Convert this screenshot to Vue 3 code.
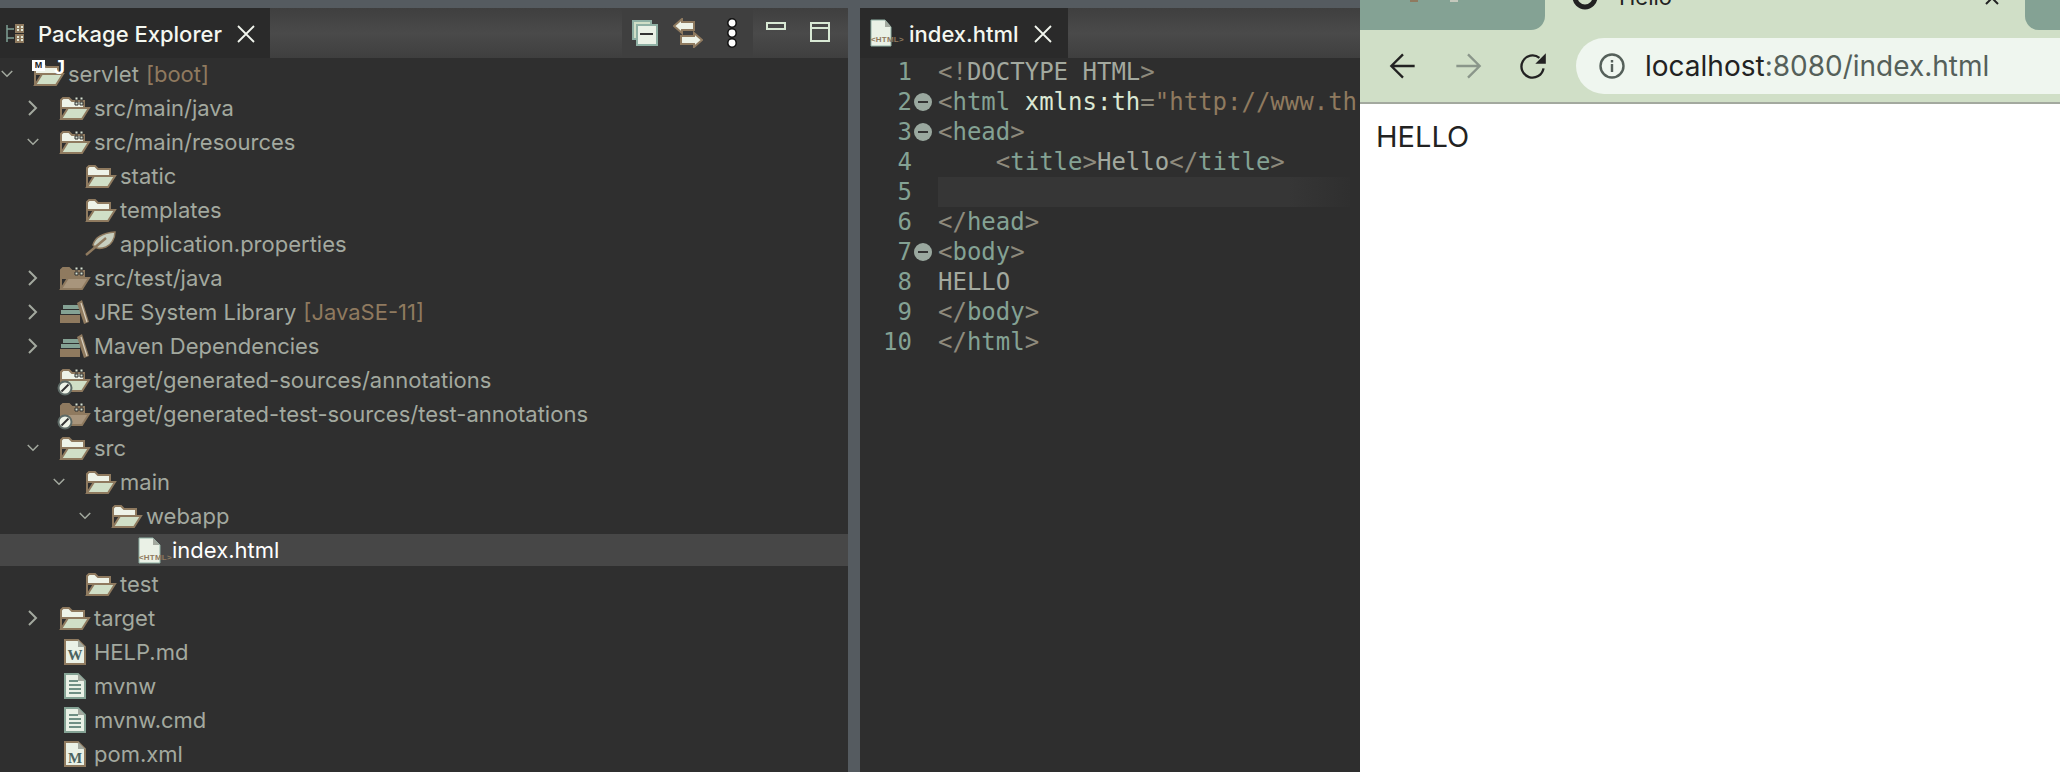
<script setup>
const rows = [
  { d: 0, c: 'down', i: 'project', t: 'servlet', x: '[boot]' },
  { d: 1, c: 'right', i: 'pkg', t: 'src/main/java' },
  { d: 1, c: 'down', i: 'pkg', t: 'src/main/resources' },
  { d: 2, c: '', i: 'folder', t: 'static' },
  { d: 2, c: '', i: 'folder', t: 'templates' },
  { d: 2, c: '', i: 'feather', t: 'application.properties' },
  { d: 1, c: 'right', i: 'pkgtest', t: 'src/test/java' },
  { d: 1, c: 'right', i: 'lib', t: 'JRE System Library', x: '[JavaSE-11]' },
  { d: 1, c: 'right', i: 'lib', t: 'Maven Dependencies' },
  { d: 1, c: '', i: 'pkgoff', t: 'target/generated-sources/annotations' },
  { d: 1, c: '', i: 'pkgtestoff', t: 'target/generated-test-sources/test-annotations' },
  { d: 1, c: 'down', i: 'folder', t: 'src' },
  { d: 2, c: 'down', i: 'folder', t: 'main' },
  { d: 3, c: 'down', i: 'folder', t: 'webapp' },
  { d: 4, c: '', i: 'html', t: 'index.html', sel: true },
  { d: 2, c: '', i: 'folder', t: 'test' },
  { d: 1, c: 'right', i: 'folder', t: 'target' },
  { d: 1, c: '', i: 'word', t: 'HELP.md' },
  { d: 1, c: '', i: 'text', t: 'mvnw' },
  { d: 1, c: '', i: 'text', t: 'mvnw.cmd' },
  { d: 1, c: '', i: 'maven', t: 'pom.xml' },
]
const isFolder = i => ['project', 'pkg', 'folder', 'pkgoff'].includes(i)
const isPkg = i => ['pkg', 'pkgoff', 'pkgtest', 'pkgtestoff'].includes(i)
const isTest = i => ['pkgtest', 'pkgtestoff'].includes(i)
const isOff = i => ['pkgoff', 'pkgtestoff'].includes(i)
const isDoc = i => ['word', 'text', 'maven'].includes(i)
const lines = [
  { n: 1, html: [['b', '<!'], ['g', 'DOCTYPE HTML'], ['b', '>']] },
  { n: 2, fold: true, html: [['b', '<'], ['t', 'html'], ['g', ' '], ['a', 'xmlns:th'], ['b', '='], ['s', '"http://www.th']] },
  { n: 3, fold: true, html: [['b', '<'], ['t', 'head'], ['b', '>']] },
  { n: 4, html: [['g', '    '], ['b', '<'], ['t', 'title'], ['b', '>'], ['g', 'Hello'], ['b', '</'], ['t', 'title'], ['b', '>']] },
  { n: 5, cur: true, html: [] },
  { n: 6, html: [['b', '</'], ['t', 'head'], ['b', '>']] },
  { n: 7, fold: true, html: [['b', '<'], ['t', 'body'], ['b', '>']] },
  { n: 8, html: [['g', 'HELLO']] },
  { n: 9, html: [['b', '</'], ['t', 'body'], ['b', '>']] },
  { n: 10, html: [['b', '</'], ['t', 'html'], ['b', '>']] },
]
</script>

<template>
  <div class="screen">
    <section class="explorer">
      <header class="bar">
        <div class="tab tab-pkg">
          <svg class="tab-ico" width="20" height="20" viewBox="0 0 20 20">
            <path d="M1 2V19M1 6H8M1 15H8" stroke="#7f9f94" stroke-width="1.5" fill="none" />
            <rect x="9" y="1" width="9" height="9" fill="#8f7a5f" />
            <rect x="9" y="11" width="9" height="9" fill="#8f7a5f" />
            <path d="M11 3h2v2h-2zM15 3h2v2h-2zM11 6h2v2h-2zM15 6h2v2h-2zM11 13h2v2h-2zM15 13h2v2h-2zM11 16h2v2h-2zM15 16h2v2h-2z" fill="#e2e8d8" />
          </svg>
          <span class="tab-label">Package Explorer</span>
          <svg class="close" width="18" height="18" viewBox="0 0 18 18"><path d="M1 1L17 17M17 1L1 17" stroke="#f2f6ee" stroke-width="1.8" /></svg>
        </div>
        <div class="tools">
          <svg width="26" height="26" viewBox="0 0 26 26">
            <rect x="1" y="1" width="18" height="18" fill="#d0dfc7" stroke="#8fb0a4" stroke-width="2" />
            <rect x="5" y="5" width="20" height="20" fill="#eaf1e6" stroke="#8fb0a4" stroke-width="2" />
            <path d="M8 14H21" stroke="#333" stroke-width="2" />
          </svg>
          <svg width="30" height="30" viewBox="0 0 30 30">
            <path d="M1 8L9 1V4H21V12H9V15Z" fill="#eef3e8" stroke="#8f7a5f" stroke-width="2" />
            <path d="M29 22L21 29V26H8V18H21V15Z" fill="#eef3e8" stroke="#8f7a5f" stroke-width="2" />
          </svg>
          <svg class="kebab" width="10" height="30" viewBox="0 0 10 30">
            <circle cx="5" cy="5" r="4.2" fill="#fff" stroke="#111" stroke-width="1.5" />
            <circle cx="5" cy="15" r="4.2" fill="#fff" stroke="#111" stroke-width="1.5" />
            <circle cx="5" cy="25" r="4.2" fill="#fff" stroke="#111" stroke-width="1.5" />
          </svg>
        </div>
        <div class="win">
          <svg width="20" height="8" viewBox="0 0 20 8"><rect x="1" y="1" width="18" height="6" fill="none" stroke="#d8e8d4" stroke-width="2" /></svg>
          <svg width="20" height="20" viewBox="0 0 20 20"><path d="M1 1H19V19H1ZM1 6H19" fill="none" stroke="#d8e8d4" stroke-width="2" /></svg>
        </div>
      </header>
      <div class="tree">
        <div v-for="r in rows" :key="r.t" class="row" :class="{ sel: r.sel }" :style="{ paddingLeft: r.d * 26 + 'px' }">
          <span class="chev">
            <svg v-if="r.c === 'down'" width="16" height="10" viewBox="0 0 16 10"><path d="M1 1L8 8L15 1" fill="none" stroke="#a3a99f" stroke-width="2" /></svg>
            <svg v-else-if="r.c === 'right'" width="10" height="16" viewBox="0 0 10 16"><path d="M1 1L8 8L1 15" fill="none" stroke="#a3a99f" stroke-width="2" /></svg>
          </span>
          <svg class="ico" width="30" height="26" viewBox="0 0 30 26">
            <template v-if="isFolder(r.i) || isTest(r.i)">
              <path d="M1 24V5L3 3H9L12 6H24V13H1Z" :fill="isTest(r.i) ? '#8f7a5f' : '#eef3e8'" stroke="#8f7a5f" stroke-width="2" />
              <path d="M1 24L8 13H29L22 24Z" :fill="isTest(r.i) ? '#a8957c' : '#d0dfc7'" stroke="#8f7a5f" stroke-width="2" />
            </template>
            <path v-if="isPkg(r.i)" d="M15 2h3v3h-3zM20 2h3v3h-3zM15 7h3v3h-3zM20 7h3v3h-3z" fill="#d8e4d4" stroke="#2f2f2f" />
            <template v-if="isOff(r.i)">
              <circle cx="5" cy="21" r="6.5" fill="#eef3e8" stroke="#5d6a66" stroke-width="2" />
              <path d="M1.500 24.500L8.500 17.500" stroke="#333" stroke-width="2" />
            </template>
            <template v-if="r.i === 'feather'">
              <path d="M7 14C9 6 17 2 29 1C29 8 25 14 20 16C15 18 10 18 7 14Z" fill="#c8cfc0" stroke="#8f7a5f" stroke-width="1.5" />
              <path d="M0 24L20 7" stroke="#8f7a5f" stroke-width="2.4" />
            </template>
            <template v-if="r.i === 'lib'">
              <rect x="0" y="16" width="20" height="8" fill="#8f7a5f" />
              <rect x="1" y="11" width="19" height="4" fill="#84a294" />
              <rect x="3" y="6" width="16" height="4" fill="#84a294" />
              <path d="M17 4L22 1L29 23L24 25Z" fill="#8f7a5f" />
              <path d="M21 4L27 23" stroke="#d8d0c0" stroke-width="1.2" />
            </template>
            <template v-if="r.i === 'html'">
              <path d="M1 1H15L22 8V26H1Z" fill="#eaf1e6" stroke="#8fb0a4" stroke-width="1" />
              <path d="M15 1V8H22Z" fill="#a3a99f" />
            </template>
            <template v-if="isDoc(r.i)">
              <path d="M5 1H18L25 8V25H5Z" fill="#eaf1e6" :stroke="r.i === 'text' ? '#84a294' : '#8f7a5f'" stroke-width="2" />
              <path d="M18 1V8H25Z" fill="#a3a99f" />
            </template>
            <path v-if="r.i === 'text'" d="M9 8H18M9 12H21M9 16H21M9 20H21" stroke="#6f8f84" stroke-width="1.8" />
            <text v-if="r.i === 'word'" class="doc-letter" x="15" y="21">W</text>
            <text v-if="r.i === 'maven'" class="doc-letter" x="15" y="22">M</text>
          </svg>
          <span v-if="r.i === 'project'" class="badge-m">M</span>
          <span v-if="r.i === 'project'" class="badge-j">J</span>
          <span v-if="r.i === 'html'" class="mini">&lt;HTML&gt;</span>
          <span class="name">{{ r.t }}</span>
          <span v-if="r.x" class="extra">{{ r.x }}</span>
        </div>
      </div>
    </section>

    <div class="sash"></div>

    <section class="editor">
      <header class="bar">
        <div class="tab tab-ed">
          <span class="ed-file">
            <svg width="22" height="28" viewBox="0 0 22 28">
              <path d="M1 1H15L21 8V27H1Z" fill="#eaf1e6" stroke="#8fb0a4" stroke-width="1" />
              <path d="M15 1V8H21Z" fill="#a3a99f" />
            </svg>
            <span class="mini mini-ed">&lt;HTML&gt;</span>
          </span>
          <span class="tab-label">index.html</span>
          <svg class="close" width="18" height="18" viewBox="0 0 18 18"><path d="M1 1L17 17M17 1L1 17" stroke="#f2f6ee" stroke-width="1.8" /></svg>
        </div>
      </header>
      <div class="code">
        <div v-for="l in lines" :key="l.n" class="line">
          <span class="num">{{ l.n }}</span>
          <span class="fold">
            <svg v-if="l.fold" width="18" height="18" viewBox="0 0 18 18"><circle cx="9" cy="9" r="9" fill="#9aa89f" /><path d="M4 9H14" stroke="#333" stroke-width="2" /></svg>
          </span>
          <span class="src" :class="{ cur: l.cur }"><span v-for="(p, k) in l.html" :key="k" :class="p[0]">{{ p[1] }}</span></span>
        </div>
      </div>
    </section>

    <section class="browser">
      <div class="strip">
        <div class="other">
          <i class="blob blob-a"></i>
          <i class="blob blob-b"></i>
        </div>
        <div class="active">
          <svg class="fav" width="26" height="26" viewBox="0 0 26 26"><circle cx="13" cy="13" r="10" fill="none" stroke="#222" stroke-width="5" /></svg>
          <span class="title">Hello</span>
          <svg class="tab-x" width="14" height="14" viewBox="0 0 14 14"><path d="M1 1L13 13M13 1L1 13" stroke="#222" stroke-width="2" /></svg>
        </div>
        <div class="other rest"></div>
      </div>
      <div class="toolbar">
        <svg width="28" height="28" viewBox="0 0 24 24"><path d="M22 12H3M12 2L2 12L12 22" fill="none" stroke="#222" stroke-width="2" /></svg>
        <svg width="28" height="28" viewBox="0 0 24 24"><path d="M2 12H21M12 2L22 12L12 22" fill="none" stroke="#8a968a" stroke-width="2" /></svg>
        <svg width="28" height="28" viewBox="0 0 24 24"><path d="M21 14A9.5 9.5 0 1 1 17.5 5" fill="none" stroke="#222" stroke-width="2" /><path d="M23 1V10H14Z" fill="#222" /></svg>
        <div class="omni">
          <svg width="26" height="26" viewBox="0 0 26 26"><circle cx="13" cy="13" r="11.5" fill="none" stroke="#55605a" stroke-width="2.4" /><path d="M13 11V19M13 7V9.500" stroke="#55605a" stroke-width="2.4" /></svg>
          <span class="url"><span class="host">localhost</span>:8080/index.html</span>
        </div>
      </div>
      <div class="page">HELLO</div>
    </section>
  </div>
</template>

<style scoped>
.screen { display: flex; width: 2060px; height: 772px; overflow: hidden; background: #2f2f2f; }
.explorer { width: 848px; padding-top: 8px; background: #2f2f2f; position: relative; }
.explorer::before, .editor::before { content: ""; position: absolute; left: 0; right: 0; top: 0; height: 8px; background: #555b60; }
.bar { height: 50px; display: flex; align-items: stretch; background: linear-gradient(180deg, #3f3f3f 0%, #4a4a4a 50%, #3f3f3f 100%); }
.tab { display: flex; align-items: center; background: #2a2a2a; font: 500 22px/1 Inter, "Liberation Sans", sans-serif; color: #f4f7f0; }
.tab-pkg { width: 270px; padding-left: 6px; box-sizing: border-box; }
.tab-ico { margin-right: 12px; }
.tab-label { white-space: nowrap; padding-top: 2px; }
.close { margin-left: 15px; margin-top: 2px; }
.tools { margin-left: 352px; width: 131px; height: 50px; background: #3f3f3f; display: flex; align-items: center; gap: 15px; padding-left: 10px; box-sizing: border-box; }
.kebab { margin-left: 9px; }
.win { display: flex; gap: 24px; align-items: flex-start; margin-left: 13px; }
.win svg { margin-top: 14px; }
.tree { font: 400 22px/34px Inter, "Liberation Sans", sans-serif; color: #a3a99f; margin-top: -1px; }
.row { height: 34px; display: flex; align-items: center; position: relative; white-space: nowrap; }
.row.sel { background: #474747; color: #fff; height: 32px; margin: 1px 0; }
.chev { width: 12px; margin-left: 1px; margin-right: 21px; display: flex; justify-content: center; flex: none; }
.ico { flex: none; margin-right: 5px; overflow: visible; }
.doc-letter { font: 700 15px "Liberation Serif", serif; fill: #4d6360; text-anchor: middle; }
.name { margin-left: -1px; }
.extra { color: #8f7a5f; margin-left: 7px; }
.badge-m { position: absolute; left: 32px; top: 3px; width: 13px; height: 11px; background: #fff; color: #222; font: 700 9px/11px "Liberation Sans", sans-serif; text-align: center; }
.badge-j { position: absolute; left: 54px; top: 1px; color: #fff; font: 700 20px/18px "Liberation Sans", sans-serif; }
.mini { position: absolute; color: #8f7a5f; font: 700 8px/10px "Liberation Sans", sans-serif; letter-spacing: 0.2px; left: 139px; top: 19px; }
.sash { width: 12px; background: #555b60; }
.editor { width: 500px; padding-top: 8px; background: #2e2e2e; position: relative; }
.tab-ed { width: 208px; padding-left: 10px; box-sizing: border-box; }
.ed-file { position: relative; width: 22px; height: 28px; margin-right: 17px; display: block; }
.ed-file svg { display: block; }
.mini-ed { left: 1px; top: 16px; }
.code { font: 400 24px/30px "DejaVu Sans Mono", monospace; margin-top: -1px; white-space: pre; }
.line { display: flex; height: 30px; align-items: center; }
.num { width: 52px; text-align: right; color: #84a294; flex: none; }
.fold { width: 26px; flex: none; display: flex; justify-content: flex-start; padding-left: 2px; box-sizing: border-box; }
.src { flex: 1; height: 30px; white-space: pre; overflow: hidden; }
.src.cur { background: linear-gradient(90deg, #363636 0%, #363636 85%, #2f2f2f 100%); margin-right: 10px; }
.b { color: #8e8a7c; }
.g { color: #a3a99f; }
.t { color: #84a294; }
.a { color: #dbe8d4; }
.s { color: #8f7a5f; }
.browser { width: 700px; display: flex; flex-direction: column; background: #fff; }
.strip { height: 30px; display: flex; background: #d0dfc7; overflow: hidden; }
.other { width: 185px; height: 30px; background: #84a294; border-bottom-right-radius: 14px; flex: none; position: relative; }
.other.rest { flex: 1; border-bottom-right-radius: 0; border-bottom-left-radius: 14px; }
.blob { position: absolute; top: 0; width: 8px; height: 2px; }
.blob-a { left: 50px; background: #8f7a5f; }
.blob-b { left: 90px; background: #c4c8bc; }
.active { width: 480px; position: relative; flex: none; }
.fav { position: absolute; left: 27px; top: -16px; }
.title { position: absolute; left: 74px; top: -15px; font: 400 22px/24px Inter, "Liberation Sans", sans-serif; color: #222; }
.tab-x { position: absolute; left: 440px; top: -9px; }
.toolbar { height: 72px; background: #d0dfc7; border-bottom: 2px solid #a3a99f; display: flex; align-items: center; gap: 37px; padding-left: 29px; }
.omni { height: 56px; margin-left: -8px; border-radius: 28px 0 0 28px; background: #eff6ef; display: flex; align-items: center; padding-left: 23px; gap: 20px; flex: 1; }
.url { font: 400 28px/1 Inter, "Liberation Sans", sans-serif; color: #55605a; white-space: nowrap; }
.host { color: #222; }
.page { flex: 1; padding: 18px 16px; font: 400 29px/30px Inter, "Liberation Sans", sans-serif; color: #222; }
</style>
